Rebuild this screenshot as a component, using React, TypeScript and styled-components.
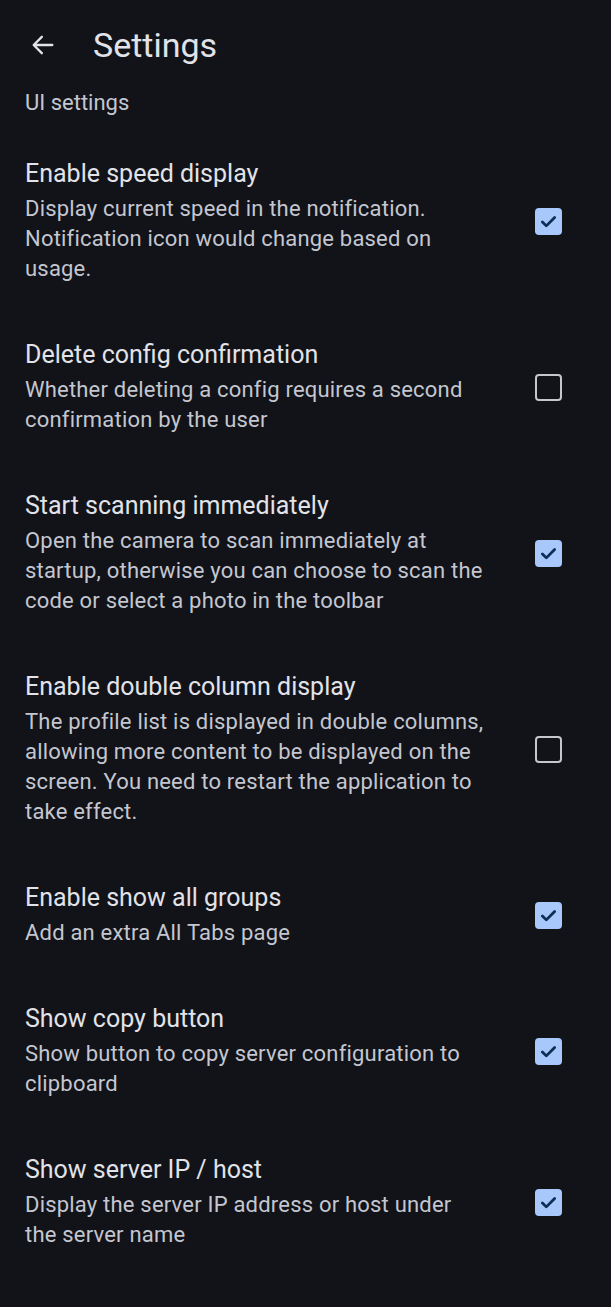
import styled, { createGlobalStyle } from "styled-components";

const GlobalStyle = createGlobalStyle`
  html, body {
    margin: 0;
    padding: 0;
    background-color: #111318;
  }
  body {
    font-family: Roboto, "Noto Sans", sans-serif;
    -webkit-font-smoothing: antialiased;
  }
`;

const Page = styled.div`
  min-height: 1307px;
  background-color: #111318;
  color: #e2e2e9;
`;

const Toolbar = styled.header`
  display: flex;
  align-items: center;
  height: 90px;
  padding-left: 29px;
`;

const BackButton = styled.button`
  display: flex;
  align-items: center;
  justify-content: center;
  width: 28px;
  height: 28px;
  padding: 0;
  border: none;
  background: none;
  color: #e2e2e9;
`;

const ToolbarTitle = styled.h1`
  margin: 0 0 0 36px;
  font-size: 34px;
  font-weight: 400;
  line-height: 40px;
  color: #e2e2e9;
`;

const Category = styled.h2`
  margin: 0 0 15px 0;
  padding: 0 25px;
  font-size: 22px;
  font-weight: 400;
  line-height: 26px;
  color: #c4c6d0;
`;

const List = styled.ul`
  list-style: none;
  margin: 0;
  padding: 0;
`;

const Item = styled.li`
  display: flex;
  align-items: center;
  padding: 27px 49px 28px 25px;
`;

const Texts = styled.div`
  flex: 1;
  min-width: 0;
`;

const Title = styled.span`
  display: block;
  font-size: 25px;
  line-height: 32px;
  color: #e2e2e9;
  margin-bottom: 4px;
`;

const Summary = styled.p`
  margin: 0;
  font-size: 22px;
  line-height: 30px;
  color: #c4c6d0;
  letter-spacing: 0.2px;
`;

const Widget = styled.div`
  display: flex;
  justify-content: flex-end;
  width: 76px;
  flex-shrink: 0;
`;

const Box = styled.div<{ $checked: boolean }>`
  display: flex;
  align-items: center;
  justify-content: center;
  box-sizing: border-box;
  width: 27px;
  height: 27px;
  border-radius: 4px;
  background-color: ${(p) => (p.$checked ? "#a8c8fb" : "transparent")};
  border: ${(p) => (p.$checked ? "none" : "2.5px solid #c6c6cc")};
`;

type Setting = {
  title: string;
  summary: string;
  checked: boolean;
};

const settings: Setting[] = [
  {
    title: "Enable speed display",
    summary:
      "Display current speed in the notification. Notification icon would change based on usage.",
    checked: true,
  },
  {
    title: "Delete config confirmation",
    summary: "Whether deleting a config requires a second confirmation by the user",
    checked: false,
  },
  {
    title: "Start scanning immediately",
    summary:
      "Open the camera to scan immediately at startup, otherwise you can choose to scan the code or select a photo in the toolbar",
    checked: true,
  },
  {
    title: "Enable double column display",
    summary:
      "The profile list is displayed in double columns, allowing more content to be displayed on the screen. You need to restart the application to take effect.",
    checked: false,
  },
  {
    title: "Enable show all groups",
    summary: "Add an extra All Tabs page",
    checked: true,
  },
  {
    title: "Show copy button",
    summary: "Show button to copy server configuration to clipboard",
    checked: true,
  },
  {
    title: "Show server IP / host",
    summary: "Display the server IP address or host under the server name",
    checked: true,
  },
];

function Checkbox({ checked }: { checked: boolean }): JSX.Element {
  return (
    <Box $checked={checked}>
      {checked && (
        <svg width="21" height="21" viewBox="0 0 24 24" fill="none">
          <path
            d="M5 12.5l4.5 4.5L19 7.5"
            stroke="#0d2f55"
            strokeWidth="3.2"
            strokeLinecap="round"
            strokeLinejoin="round"
          />
        </svg>
      )}
    </Box>
  );
}

function App(): JSX.Element {
  return (
    <Page>
      <GlobalStyle />
      <Toolbar>
        <BackButton aria-label="Back">
          <svg width="28" height="28" viewBox="0 0 24 24" fill="none">
            <path
              d="M20 12H4.5M11 5l-7 7 7 7"
              stroke="currentColor"
              strokeWidth="2"
              strokeLinecap="round"
              strokeLinejoin="round"
            />
          </svg>
        </BackButton>
        <ToolbarTitle>Settings</ToolbarTitle>
      </Toolbar>
      <Category>UI settings</Category>
      <List>
        {settings.map((s) => (
          <Item key={s.title}>
            <Texts>
              <Title>{s.title}</Title>
              <Summary>{s.summary}</Summary>
            </Texts>
            <Widget>
              <Checkbox checked={s.checked} />
            </Widget>
          </Item>
        ))}
      </List>
    </Page>
  );
}

export default App;
